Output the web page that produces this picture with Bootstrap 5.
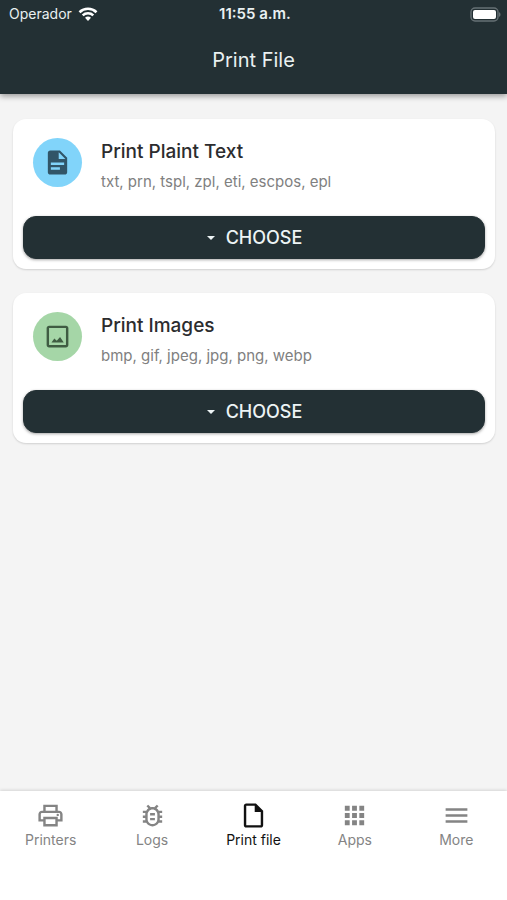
<!DOCTYPE html>
<html lang="en">
<head>
<meta charset="utf-8">
<meta name="viewport" content="width=device-width, initial-scale=1">
<title>Print File</title>
<link href="https://cdn.jsdelivr.net/npm/bootstrap@5.3.0/dist/css/bootstrap.min.css" rel="stylesheet">
<style>
  body { font-family: Inter, Roboto, "Liberation Sans", sans-serif; background: #f4f4f4; color: #2c2c2e; }
  svg { display: block; fill: currentColor; flex: none; }
  .app-header { background: #233034; color: #e9f0f1; box-shadow: 0 2px 6px rgba(0, 0, 0, .4); padding-bottom: 20px; }
  .status-bar { display: grid; grid-template-columns: 1fr auto 1fr; align-items: center; height: 28px; padding: 0 6px 0 9px; font-size: 15px; line-height: 20px; }
  .carrier { font-size: 14px; gap: 6px; }
  .page-title { font-size: 20px; line-height: 28px; margin-top: 18px; font-weight: 400; }
  .content { padding: 25px 12px 25px 13px; gap: 24px; }
  .file-card { border: 0; border-radius: 13px; padding: 19px 10px 10px; box-shadow: 0 1px 2px rgba(0, 0, 0, .15); }
  .card-head { gap: 19px; padding: 0 10px; margin-bottom: 24px; }
  .round-icon { width: 49px; height: 49px; }
  .blue { background: #81d4fa; color: #315568; }
  .green { background: #a5d6a7; color: #3f5c42; }
  .card-name { font-size: 19px; line-height: 28px; font-weight: 500; }
  .card-types { font-size: 15px; line-height: 20px; margin-top: 6px; color: #808080; }
  .choose { --bs-btn-color: #edf4f5; --bs-btn-bg: #233034; --bs-btn-border-color: #233034; --bs-btn-hover-color: #fff; --bs-btn-hover-bg: #304045; --bs-btn-active-color: #fff; --bs-btn-active-bg: #1b2528; --bs-btn-padding-y: 8px; --bs-btn-border-radius: 13px; font-size: 18px; line-height: 25px; font-weight: 500; gap: 10px; box-shadow: 0 1px 3px rgba(0, 0, 0, .35); }
  .tab-bar { background: #fff; padding: 10px 0 50px; box-shadow: 0 -1px 3px rgba(0, 0, 0, .13); }
  .tab-link { color: #848484; font-size: 14px; line-height: 20px; text-decoration: none; }
  .tab-link.active { color: #111; }
</style>
<script src="https://cdn.jsdelivr.net/npm/bootstrap@5.3.0/dist/js/bootstrap.bundle.min.js"></script>
</head>
<body class="d-flex flex-column min-vh-100">
<header class="app-header">
  <div class="status-bar">
    <div class="carrier d-flex align-items-center">
      <span>Operador</span>
      <svg width="20" height="16" viewBox="0 0 20 16" aria-hidden="true"><g fill="none" stroke="#fff" stroke-width="2.6"><path d="M1.500 6.200a12.300 12.300 0 0 1 17 0"/><path d="M4.700 9.400a7.800 7.800 0 0 1 10.600 0"/></g><path fill="#fff" d="M10 15l-3-3.200a4.500 4.500 0 0 1 6 0z"/></svg>
    </div>
    <span class="fw-semibold">11:55 a.m.</span>
    <svg class="ms-auto" width="31" height="15" viewBox="0 0 31 15" aria-hidden="true"><rect x="1" y="1" width="27" height="13" rx="4" fill="none" stroke="#667074" stroke-width="1.4"/><rect x="3" y="3" width="23" height="9" rx="2" fill="#fff"/><path d="M29 5.200c2 .6 2 4 0 4.600z" fill="#667074"/></svg>
  </div>
  <h1 class="page-title text-center mb-0">Print File</h1>
</header>

<main class="content d-flex flex-column flex-grow-1">
  <section class="card file-card">
    <div class="card-head d-flex align-items-start">
      <div class="round-icon blue rounded-circle d-flex align-items-center justify-content-center">
        <svg width="29" height="29" viewBox="0 0 24 24" aria-hidden="true"><path fill-rule="evenodd" d="M14 2H6c-1.100 0-2 .9-2 2v16c0 1.100.9 2 2 2h12c1.100 0 2-.9 2-2V8zM14 18H6.500v-2H14zM17.500 14h-11v-2h11zM13 9V3.500L18.500 9z"/></svg>
      </div>
      <div>
        <h2 class="card-name mb-0">Print Plaint Text</h2>
        <p class="card-types mb-0">txt, prn, tspl, zpl, eti, escpos, epl</p>
      </div>
    </div>
    <button type="button" class="btn choose d-flex align-items-center justify-content-center">
      <svg width="10" height="6" viewBox="0 0 10 6" aria-hidden="true"><path d="M1 1h8L5 5z"/></svg>CHOOSE
    </button>
  </section>

  <section class="card file-card">
    <div class="card-head d-flex align-items-start">
      <div class="round-icon green rounded-circle d-flex align-items-center justify-content-center">
        <svg width="29" height="29" viewBox="0 0 24 24" aria-hidden="true"><path d="M19 5v14H5V5h14m0-2H5c-1.100 0-2 .9-2 2v14c0 1.100.9 2 2 2h14c1.100 0 2-.9 2-2V5c0-1.100-.9-2-2-2zM7 17l2.400-3.300 2 1.800 2.700-3L17.200 17z"/></svg>
      </div>
      <div>
        <h2 class="card-name mb-0">Print Images</h2>
        <p class="card-types mb-0">bmp, gif, jpeg, jpg, png, webp</p>
      </div>
    </div>
    <button type="button" class="btn choose d-flex align-items-center justify-content-center">
      <svg width="10" height="6" viewBox="0 0 10 6" aria-hidden="true"><path d="M1 1h8L5 5z"/></svg>CHOOSE
    </button>
  </section>
</main>

<nav class="tab-bar nav nav-fill flex-nowrap" aria-label="Main">
  <a href="#printers" class="tab-link col d-flex flex-column align-items-center">
    <svg width="29" height="29" viewBox="0 0 24 24" aria-hidden="true"><path d="M19 8h-1V3H6v5H5c-1.660 0-3 1.340-3 3v6h4v4h12v-4h4v-6c0-1.660-1.340-3-3-3zM8 5h8v3H8V5zm8 12v2H8v-4h8v2zm2-2v-2H6v2H4v-4c0-.55.45-1 1-1h14c.55 0 1 .45 1 1v4h-2z"/><circle cx="18" cy="11.500" r="1"/></svg>
    Printers
  </a>
  <a href="#logs" class="tab-link col d-flex flex-column align-items-center">
    <svg width="29" height="29" viewBox="0 0 24 24" aria-hidden="true"><path d="M20 8h-2.810c-.45-.78-1.070-1.450-1.820-1.960L17 4.410 15.590 3l-2.170 2.170C12.960 5.060 12.490 5 12 5s-.96.06-1.410.17L8.410 3 7 4.410l1.620 1.630C7.880 6.550 7.260 7.220 6.810 8H4v2h2.090c-.05.33-.09.66-.09 1v1H4v2h2v1c0 .34.04.67.09 1H4v2h2.810c1.040 1.790 2.970 3 5.190 3s4.150-1.210 5.190-3H20v-2h-2.090c.05-.33.09-.66.09-1v-1h2v-2h-2v-1c0-.34-.04-.67-.09-1H20V8zm-4 4v3c0 2.200-1.800 4-4 4s-4-1.800-4-4v-4c0-2.200 1.800-4 4-4s4 1.800 4 4v1zm-6 2h4v2h-4zm0-4h4v2h-4z"/></svg>
    Logs
  </a>
  <a href="#print-file" class="tab-link active col d-flex flex-column align-items-center" aria-current="page">
    <svg width="29" height="29" viewBox="0 0 24 24" aria-hidden="true"><path d="M14 2H6c-1.100 0-2 .9-2 2v16c0 1.100.9 2 2 2h12c1.100 0 2-.9 2-2V8l-6-6zM6 20V4h7v5h5v11H6z"/></svg>
    Print file
  </a>
  <a href="#apps" class="tab-link col d-flex flex-column align-items-center">
    <svg width="29" height="29" viewBox="0 0 24 24" aria-hidden="true"><path d="M4 4h4v4H4zM10 4h4v4h-4zM16 4h4v4h-4zM4 10h4v4H4zM10 10h4v4h-4zM16 10h4v4h-4zM4 16h4v4H4zM10 16h4v4h-4zM16 16h4v4h-4z"/></svg>
    Apps
  </a>
  <a href="#more" class="tab-link col d-flex flex-column align-items-center">
    <svg width="29" height="29" viewBox="0 0 24 24" aria-hidden="true"><path d="M3 18h18v-2H3v2zm0-5h18v-2H3v2zm0-7v2h18V6H3z"/></svg>
    More
  </a>
</nav>
</body>
</html>
